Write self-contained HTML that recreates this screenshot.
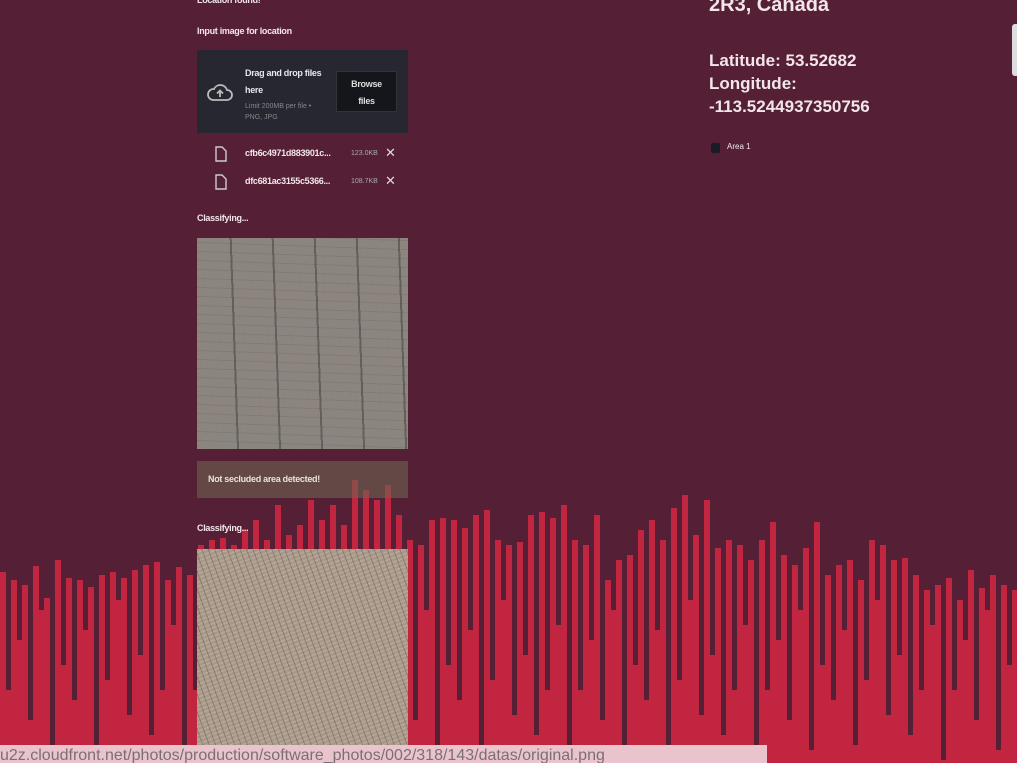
<!DOCTYPE html>
<html><head><meta charset="utf-8"><style>
*{margin:0;padding:0;box-sizing:border-box}
html,body{width:1017px;height:763px;overflow:hidden}
body{background:#552036;font-family:"Liberation Sans",sans-serif;color:#f2e6ea;position:relative}
.a{position:absolute}
.s{font-size:9px;font-weight:bold;letter-spacing:-0.3px}
.img1{background:
repeating-linear-gradient(88deg,transparent 0 40px,rgba(60,60,55,.5) 40px 42px),
repeating-linear-gradient(2deg,transparent 0 8px,rgba(90,85,80,.2) 8px 9px),
repeating-linear-gradient(92deg,transparent 0 5px,rgba(170,130,120,.2) 5px 6px),
#8a857f}
.img2{background:
repeating-linear-gradient(70deg,transparent 0 5px,rgba(60,50,40,.3) 5px 6px),
repeating-linear-gradient(160deg,transparent 0 3px,rgba(230,215,195,.3) 3px 4px),
#a8998a}
</style></head><body>
<svg class="a" style="left:0;top:0" width="1017" height="763" viewBox="0 0 1017 763">
<g fill="#c2253f">
<path d="M0 572h6V763h-6zM11 580h6V763h-6zM22 585h6V763h-6zM33 566h6V763h-6zM44 598h6V763h-6zM55 560h6V763h-6zM66 578h6V763h-6zM77 580h6V763h-6zM88 587h6V763h-6zM99 575h6V763h-6zM110 572h6V763h-6zM121 578h6V763h-6zM132 570h6V763h-6zM143 565h6V763h-6zM154 562h6V763h-6zM165 580h6V763h-6zM176 567h6V763h-6zM187 575h6V763h-6z"/>
<path d="M198 545h6V763h-6zM209 540h6V763h-6zM220 538h6V763h-6zM231 545h6V763h-6zM242 530h6V763h-6zM253 520h6V763h-6zM264 540h6V763h-6zM275 505h6V763h-6zM286 535h6V763h-6zM297 525h6V763h-6zM308 500h6V763h-6zM319 520h6V763h-6zM330 505h6V763h-6zM341 525h6V763h-6zM352 480h6V763h-6zM363 490h6V763h-6zM374 500h6V763h-6zM385 485h6V763h-6z"/>
<path d="M396 515h6V763h-6zM407 540h6V763h-6zM418 545h6V763h-6zM429 520h6V763h-6zM440 518h6V763h-6zM451 520h6V763h-6zM462 528h6V763h-6zM473 515h6V763h-6zM484 510h6V763h-6zM495 540h6V763h-6zM506 545h6V763h-6zM517 542h6V763h-6zM528 515h6V763h-6zM539 512h6V763h-6zM550 518h6V763h-6zM561 505h6V763h-6zM572 540h6V763h-6zM583 545h6V763h-6zM594 515h6V763h-6zM605 580h6V763h-6z"/>
<path d="M616 560h6V763h-6zM627 555h6V763h-6zM638 530h6V763h-6zM649 520h6V763h-6zM660 540h6V763h-6zM671 508h6V763h-6zM682 495h6V763h-6zM693 535h6V763h-6zM704 500h6V763h-6zM715 548h6V763h-6zM726 540h6V763h-6zM737 545h6V763h-6zM748 560h6V763h-6zM759 540h6V763h-6zM770 522h6V763h-6zM781 555h6V763h-6zM792 565h6V763h-6zM803 548h6V763h-6zM814 522h6V763h-6zM825 575h6V763h-6z"/>
<path d="M836 565h6V763h-6zM847 560h6V763h-6zM858 580h6V763h-6zM869 540h6V763h-6zM880 545h6V763h-6zM891 560h6V763h-6zM902 558h6V763h-6zM913 575h6V763h-6zM924 590h6V763h-6zM935 585h6V763h-6zM946 578h6V763h-6zM957 600h6V763h-6zM968 570h6V763h-6zM979 588h6V763h-6zM990 575h6V763h-6zM1001 585h6V763h-6zM1012 590h6V763h-6z"/>
<path d="M6 690h5V763h-5zM17 640h5V763h-5zM28 720h5V763h-5zM39 610h5V763h-5zM50 750h5V763h-5zM61 665h5V763h-5zM72 700h5V763h-5zM83 630h5V763h-5zM94 745h5V763h-5zM105 680h5V763h-5zM116 600h5V763h-5zM127 715h5V763h-5zM138 655h5V763h-5zM149 735h5V763h-5zM160 690h5V763h-5zM171 625h5V763h-5zM182 760h5V763h-5zM193 690h5V763h-5z"/>
<path d="M402 640h5V763h-5zM413 720h5V763h-5zM424 610h5V763h-5zM435 750h5V763h-5zM446 665h5V763h-5zM457 700h5V763h-5zM468 630h5V763h-5zM479 745h5V763h-5zM490 680h5V763h-5zM501 600h5V763h-5zM512 715h5V763h-5zM523 655h5V763h-5zM534 735h5V763h-5zM545 690h5V763h-5zM556 625h5V763h-5zM567 760h5V763h-5zM578 690h5V763h-5zM589 640h5V763h-5zM600 720h5V763h-5zM611 610h5V763h-5zM622 750h5V763h-5zM633 665h5V763h-5zM644 700h5V763h-5zM655 630h5V763h-5zM666 745h5V763h-5zM677 680h5V763h-5zM688 600h5V763h-5zM699 715h5V763h-5zM710 655h5V763h-5zM721 735h5V763h-5zM732 690h5V763h-5zM743 625h5V763h-5zM754 760h5V763h-5zM765 690h5V763h-5zM776 640h5V763h-5zM787 720h5V763h-5zM798 610h5V763h-5zM809 750h5V763h-5zM820 665h5V763h-5zM831 700h5V763h-5zM842 630h5V763h-5zM853 745h5V763h-5zM864 680h5V763h-5zM875 600h5V763h-5zM886 715h5V763h-5zM897 655h5V763h-5zM908 735h5V763h-5zM919 690h5V763h-5zM930 625h5V763h-5zM941 760h5V763h-5zM952 690h5V763h-5zM963 640h5V763h-5zM974 720h5V763h-5zM985 610h5V763h-5zM996 750h5V763h-5zM1007 665h5V763h-5z"/>
</g></svg>
<div class="a s" style="left:197px;top:-5px;font-size:9px">Location found!</div>
<div class="a s" style="left:197px;top:26px">Input image for location</div>
<div class="a" style="left:197px;top:50px;width:211px;height:83px;background:#262730"></div>
<svg class="a" style="left:206px;top:82px" width="28" height="20" viewBox="0 0 28 20"><path d="M7 18h14a5 5 0 0 0 0-10 7 7 0 0 0-13-1 5.5 5.5 0 0 0-1 11z" fill="none" stroke="#bbb" stroke-width="1.8"/><path d="M14 15V9M11 11.5l3-3 3 3" fill="none" stroke="#bbb" stroke-width="1.8"/></svg>
<div class="a s" style="left:245px;top:65px;line-height:17px;color:#e8e8ea">Drag and drop files<br>here</div>
<div class="a" style="left:245px;top:101px;font-size:7px;color:#888;line-height:11px">Limit 200MB per file •<br>PNG, JPG</div>
<div class="a s" style="left:336px;top:71px;width:61px;height:41px;background:#15161c;border:1px solid #333;text-align:center;line-height:17px;padding-top:4px;color:#ddd">Browse<br>files</div>
<svg class="a" style="left:214px;top:146px" width="14" height="16"><path d="M2 1h6l4 4v10H2z" fill="none" stroke="#ccc" stroke-width="1.4"/></svg>
<div class="a s" style="left:245px;top:148px">cfb6c4971d883901c...</div>
<div class="a" style="left:351px;top:150px;font-size:7px;color:#aaa">123.0KB</div>
<div class="a" style="left:385px;top:145px;font-size:13px;color:#ddd">✕</div>
<svg class="a" style="left:214px;top:174px" width="14" height="16"><path d="M2 1h6l4 4v10H2z" fill="none" stroke="#ccc" stroke-width="1.4"/></svg>
<div class="a s" style="left:245px;top:176px">dfc681ac3155c5366...</div>
<div class="a" style="left:351px;top:178px;font-size:7px;color:#aaa">108.7KB</div>
<div class="a" style="left:385px;top:173px;font-size:13px;color:#ddd">✕</div>
<div class="a s" style="left:197px;top:213px">Classifying...</div>
<div class="a img1" style="left:197px;top:238px;width:211px;height:211px"></div>
<div class="a" style="left:197px;top:461px;width:211px;height:37px;background:rgba(110,100,80,.6)"></div>
<div class="a s" style="left:208px;top:474px;color:#e8e4da">Not secluded area detected!</div>
<div class="a s" style="left:197px;top:523px">Classifying...</div>
<div class="a img2" style="left:197px;top:549px;width:211px;height:196px"></div>
<div class="a" style="left:709px;top:-6px;font-size:20px;font-weight:bold">2R3, Canada</div>
<div class="a" style="left:709px;top:49px;font-size:17px;font-weight:bold;line-height:23px">Latitude: 53.52682<br>Longitude:<br>-113.5244937350756</div>
<div class="a" style="left:711px;top:143px;width:9px;height:10px;background:#1a1b24;border-radius:2px"></div>
<div class="a" style="left:727px;top:142px;font-size:8px">Area 1</div>
<div class="a" style="left:1012px;top:24px;width:8px;height:52px;background:#ddd;border-radius:3px"></div>
<div class="a" style="left:0;top:745px;width:767px;height:18px;background:#e9c4cc;color:#7b6f74;font-size:16px;line-height:22px;white-space:nowrap;overflow:hidden">u2z.cloudfront.net/photos/production/software_photos/002/318/143/datas/original.png</div>
</body></html>
